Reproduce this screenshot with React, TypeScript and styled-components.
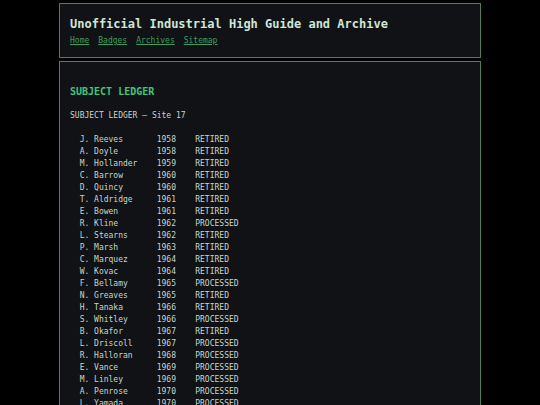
import styled, { createGlobalStyle } from 'styled-components';

const GlobalStyle = createGlobalStyle`
	html, body {
		margin: 0;
		padding: 0;
		background: #000000;
	}
	body {
		font-family: 'DejaVu Sans Mono', 'Liberation Mono', monospace;
		color: #c6d6ca;
	}
`;

const Page = styled.div`
	width: 422px;
	margin: 0 auto;
	padding-top: 3px;
	display: flex;
	flex-direction: column;
	gap: 3px;
`;

const Panel = styled.div`
	background: #111216;
	border: 1px solid #4a8060;
	padding: 13px 10px 10px;
`;

const SiteTitle = styled.h1`
	margin: 0;
	font-size: 12px;
	line-height: 15px;
	font-weight: bold;
	color: #cfe6d6;
`;

const Nav = styled.nav`
	display: flex;
	gap: 9px;
	margin-top: 3px;
	font-size: 8px;
	line-height: 12px;
`;

const NavLink = styled.a`
	color: #3f9c63;
	text-decoration: underline;
`;

const Main = styled(Panel)`
	padding: 23px 10px 40px;
`;

const Heading = styled.h2`
	margin: 0;
	font-size: 10px;
	line-height: 14px;
	font-weight: bold;
	color: #40c47c;
`;

const Subtitle = styled.p`
	margin: 11px 0 12px;
	font-size: 8px;
	line-height: 12px;
`;

const Ledger = styled.pre`
	margin: 0;
	font-family: 'DejaVu Sans Mono', 'Liberation Mono', monospace;
	font-size: 8px;
	line-height: 12px;
	color: #c6d6ca;
`;

const subjects: [string, number, string][] = [
	['J. Reeves', 1958, 'RETIRED'],
	['A. Doyle', 1958, 'RETIRED'],
	['M. Hollander', 1959, 'RETIRED'],
	['C. Barrow', 1960, 'RETIRED'],
	['D. Quincy', 1960, 'RETIRED'],
	['T. Aldridge', 1961, 'RETIRED'],
	['E. Bowen', 1961, 'RETIRED'],
	['R. Kline', 1962, 'PROCESSED'],
	['L. Stearns', 1962, 'RETIRED'],
	['P. Marsh', 1963, 'RETIRED'],
	['C. Marquez', 1964, 'RETIRED'],
	['W. Kovac', 1964, 'RETIRED'],
	['F. Bellamy', 1965, 'PROCESSED'],
	['N. Greaves', 1965, 'RETIRED'],
	['H. Tanaka', 1966, 'RETIRED'],
	['S. Whitley', 1966, 'PROCESSED'],
	['B. Okafor', 1967, 'RETIRED'],
	['L. Driscoll', 1967, 'PROCESSED'],
	['R. Halloran', 1968, 'PROCESSED'],
	['E. Vance', 1969, 'PROCESSED'],
	['M. Linley', 1969, 'PROCESSED'],
	['A. Penrose', 1970, 'PROCESSED'],
	['L. Yamada', 1970, 'PROCESSED'],
	['G. Ashby', 1971, 'PROCESSED'],
	['K. Moreau', 1971, 'PROCESSED'],
];

const ledgerText = subjects
	.map(([name, year, status]) => `  ${name.padEnd(16)}${year}    ${status}`)
	.join('\n');

const App = () => {
	return (
		<>
			<GlobalStyle />
			<Page>
				<Panel>
					<SiteTitle>Unofficial Industrial High Guide and Archive</SiteTitle>
					<Nav>
						<NavLink href="#">Home</NavLink>
						<NavLink href="#">Badges</NavLink>
						<NavLink href="#">Archives</NavLink>
						<NavLink href="#">Sitemap</NavLink>
					</Nav>
				</Panel>
				<Main>
					<Heading>SUBJECT LEDGER</Heading>
					<Subtitle>SUBJECT LEDGER — Site 17</Subtitle>
					<Ledger>{ledgerText}</Ledger>
				</Main>
			</Page>
		</>
	);
};

export default App;
